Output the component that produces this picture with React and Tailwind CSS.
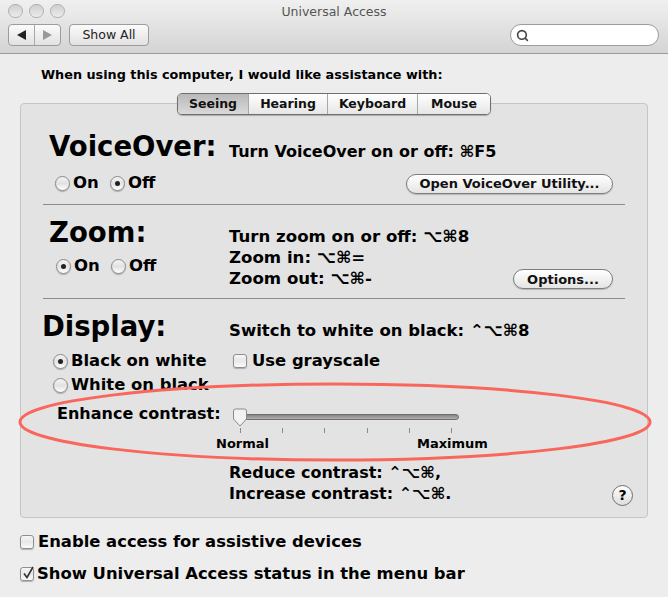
import { Search } from "lucide-react";

const font = "font-['DejaVu_Sans','Noto_Sans',sans-serif]";

const Radio = ({ on }) => (
  <span className="w-[15px] h-[15px] shrink-0 rounded-full border border-[#8a8a8a] bg-gradient-to-b from-[#f4f4f4] via-[#e2e2e2] to-[#ffffff] flex items-center justify-center shadow-[0_1px_1px_rgba(0,0,0,0.25)]">
    {on && <span className="w-[5px] h-[5px] rounded-full bg-[#222]" />}
  </span>
);

const Check = ({ on }) => (
  <span className="relative w-[14px] h-[14px] shrink-0 rounded-[3px] border border-[#8f8f8f] bg-gradient-to-b from-[#f6f6f6] via-[#e8e8e8] to-[#fbfbfb] shadow-[0_1px_1px_rgba(0,0,0,0.25)]">
    {on && (
      <svg className="absolute -top-[3px] left-0" width="16" height="16" viewBox="0 0 16 16" fill="none">
        <path d="M3 8.5 L6 12.5 L12 2" stroke="#333" strokeWidth="1.6" />
      </svg>
    )}
  </span>
);

const Pill = ({ children, className = "" }) => (
  <div className={`h-[20px] rounded-full border border-[#7d7d7d] bg-gradient-to-b from-[#ffffff] via-[#f2f2f2] to-[#e4e4e4] flex items-center justify-center text-[13px] font-bold text-[#111] shadow-[0_1px_1px_rgba(0,0,0,0.2)] ${className}`}>
    {children}
  </div>
);

const Tab = ({ children, active, className = "" }) => (
  <div className={`h-full flex items-center justify-center text-[12.5px] font-bold text-[#111] border-r border-[#a8a8a8] last:border-r-0 ${active ? "bg-gradient-to-b from-[#b9b9b9] to-[#d9d9d9]" : "bg-gradient-to-b from-[#ffffff] to-[#e6e6e6]"} ${className}`}>
    {children}
  </div>
);

const Ticks = () => (
  <div className="flex justify-between w-[212px] ml-[219px] mt-[5px]">
    {[0, 1, 2, 3, 4, 5].map((i) => (
      <span key={i} className="w-px h-[5px] bg-[#8a8a8a]" />
    ))}
  </div>
);

export default function App() {
  return (
    <div className={`relative w-[668px] h-[597px] overflow-hidden bg-[#ededed] text-black ${font}`}>
      {/* toolbar */}
      <div className="h-[54px] bg-gradient-to-b from-[#f0f0f0] to-[#d4d4d4] border-b border-[#9a9a9a] relative">
        <div className="absolute left-0 right-0 top-[3px] text-center text-[12.5px] text-[#555]">Universal Access</div>
        <div className="flex gap-[6px] pl-[8px] pt-[4px]">
          {[0, 1, 2].map((i) => (
            <span key={i} className="w-[15px] h-[14px] rounded-full border border-[#b0b0b0] bg-gradient-to-b from-[#cfcfcf] to-[#ececec]" />
          ))}
        </div>
        <div className="flex items-center pl-[8px] pt-[6px]">
          <div className="w-[53px] h-[22px] flex rounded-[4px] border border-[#9c9c9c] bg-gradient-to-b from-[#fbfbfb] to-[#e2e2e2]">
            <div className="flex-1 flex items-center justify-center border-r border-[#a8a8a8]">
              <span className="w-0 h-0 border-y-[5px] border-y-transparent border-r-[9px] border-r-[#222]" />
            </div>
            <div className="flex-1 flex items-center justify-center">
              <span className="w-0 h-0 border-y-[5px] border-y-transparent border-l-[9px] border-l-[#999]" />
            </div>
          </div>
          <div className="ml-[8px] w-[80px] h-[22px] rounded-[4px] border border-[#9c9c9c] bg-gradient-to-b from-[#fbfbfb] to-[#e2e2e2] flex items-center justify-center text-[12.5px] text-[#222]">
            Show All
          </div>
          <div className="ml-[361px] w-[149px] h-[22px] rounded-full border border-[#9c9c9c] bg-white flex items-center pl-[5px]">
            <Search size={13} strokeWidth={3} className="text-[#444]" />
          </div>
        </div>
      </div>

      <div className="pl-[41px] pt-[13px] text-[12.8px] font-bold leading-[16px]">When using this computer, I would like assistance with:</div>

      {/* panel */}
      <div className="relative mt-[20px] ml-[20px] w-[628px] h-[415px] rounded-[4px] border border-[#c6c6c6] bg-[#e3e3e3] font-bold">
        <div className="absolute -top-[11px] left-[156px] w-[314px] h-[22px] flex rounded-[5px] border border-[#6f6f6f] overflow-hidden shadow-[0_1px_1px_rgba(0,0,0,0.25)]">
          <Tab active className="w-[71px]">Seeing</Tab>
          <Tab className="w-[79px]">Hearing</Tab>
          <Tab className="w-[90px]">Keyboard</Tab>
          <Tab className="flex-1">Mouse</Tab>
        </div>

        {/* VoiceOver */}
        <div className="mx-[22px] h-[101px] border-b border-[#8c8c8c] flex">
          <div className="w-[186px] pl-[6px] pt-[22px]">
            <div className="text-[27.5px] leading-[40px]">VoiceOver:</div>
            <div className="flex items-center pl-[6px] mt-[6px] text-[16.5px] leading-[22px]">
              <Radio /><span className="ml-[3px] w-[37px]">On</span>
              <Radio on /><span className="ml-[3px]">Off</span>
            </div>
          </div>
          <div className="flex-1 pt-[36px]">
            <div className="text-[16px] leading-[24px]">Turn VoiceOver on or off: ⌘F5</div>
            <div className="flex justify-end pr-[12px] mt-[10px]">
              <Pill className="w-[207px]">Open VoiceOver Utility...</Pill>
            </div>
          </div>
        </div>

        {/* Zoom */}
        <div className="mx-[22px] h-[94px] border-b border-[#8c8c8c] flex">
          <div className="w-[186px] pl-[6px] pt-[7px]">
            <div className="text-[27.5px] leading-[40px]">Zoom:</div>
            <div className="flex items-center pl-[7px] mt-[3px] text-[16.5px] leading-[22px]">
              <Radio on /><span className="ml-[3px] w-[37px]">On</span>
              <Radio /><span className="ml-[3px]">Off</span>
            </div>
          </div>
          <div className="flex-1 pt-[21px] text-[16.6px] leading-[21px] flex">
            <div>
              <div>Turn zoom on or off: ⌥⌘8</div>
              <div>Zoom in: ⌥⌘=</div>
              <div>Zoom out: ⌥⌘-</div>
            </div>
            <div className="ml-auto pr-[12px] pt-[43px]">
              <Pill className="w-[100px]">Options...</Pill>
            </div>
          </div>
        </div>

        {/* Display */}
        <div className="relative">
          <div className="flex ml-[21px] mr-[22px]">
            <div className="w-[187px] pt-[7px] text-[27.5px] leading-[40px]">Display:</div>
            <div className="pt-[20px] text-[16.5px] leading-[24px]">Switch to white on black: ⌃⌥⌘8</div>
          </div>
          <div className="flex items-center pl-[32px] mt-[3px] text-[16.4px] leading-[24px]">
            <Radio on /><span className="ml-[3px] w-[162px]">Black on white</span>
            <Check /><span className="ml-[5px]">Use grayscale</span>
          </div>
          <div className="flex items-center pl-[32px] text-[16.4px] leading-[24px]">
            <Radio /><span className="ml-[3px]">White on black</span>
          </div>
          <div className="flex items-center pl-[36px] mt-[8px] h-[18px]">
            <span className="w-[176px] text-[16px]">Enhance contrast:</span>
            <div className="relative w-[226px] h-[6px] mt-[6px] rounded-full border border-[#6f6f6f] bg-gradient-to-b from-[#8a8585] to-[#b5b0b0]">
              <svg className="absolute -top-[7px] -left-[2px]" width="16" height="20" viewBox="0 0 16 20">
                <path d="M1.5 3 Q1.5 1 3.5 1 H12.5 Q14.5 1 14.5 3 V11 L8 18 L1.5 11 Z" fill="#f2f2f2" stroke="#8a8a8a" />
              </svg>
            </div>
          </div>
          <Ticks />
          <div className="flex text-[13px] leading-[16px] mt-[3px]">
            <span className="ml-[195px] w-[201px]">Normal</span>
            <span>Maximum</span>
          </div>
          <div className="flex pl-[208px] text-[16px] leading-[21px] mt-[10px]">
            <div>
              <div>Reduce contrast: ⌃⌥⌘,</div>
              <div>Increase contrast: ⌃⌥⌘.</div>
            </div>
          </div>
          <div className="absolute right-[14px] top-[186px] w-[21px] h-[21px] rounded-full border border-[#6f6f6f] bg-gradient-to-b from-[#ffffff] to-[#dddddd] flex items-center justify-center text-[14px]">?</div>
        </div>
      </div>

      <div className="pl-[20px] pt-[12px] text-[16.4px] font-bold leading-[24px] flex items-center">
        <Check /><span className="ml-[4px]">Enable access for assistive devices</span>
      </div>
      <div className="pl-[20px] pt-[8px] text-[16.4px] font-bold leading-[24px] flex items-center">
        <Check on /><span className="ml-[3px]">Show Universal Access status in the menu bar</span>
      </div>

      {/* red annotation */}
      <svg className="absolute left-0 top-0 pointer-events-none" width="668" height="597" viewBox="0 0 668 597" fill="none">
        <ellipse cx="335" cy="422" rx="315" ry="38" stroke="#f9675c" strokeWidth="3" />
      </svg>
    </div>
  );
}
